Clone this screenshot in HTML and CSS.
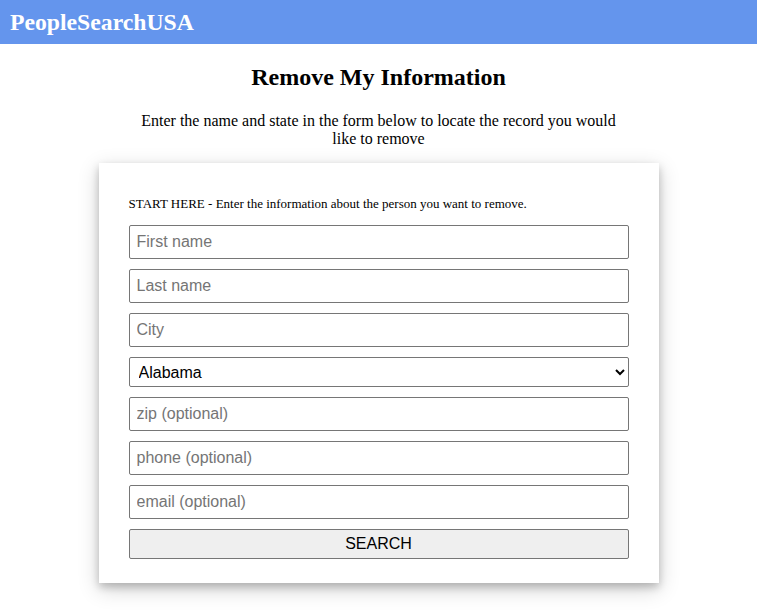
FILE: index.html
```html
<!DOCTYPE html>
<html>
<head>
<meta charset="utf-8">
<link rel="stylesheet" href="styles.css">
</head>
<body>
<header class="topbar"><span class="brand">PeopleSearchUSA</span></header>
<main class="content">
  <h2 class="title">Remove My Information</h2>
  <p class="intro">Enter the name and state in the form below to locate the record you would like to remove</p>
  <form class="card">
    <p class="hint">START HERE - Enter the information about the person you want to remove.</p>
    <input class="field" type="text" placeholder="First name">
    <input class="field" type="text" placeholder="Last name">
    <input class="field" type="text" placeholder="City">
    <select class="field select">
      <option>Alabama</option>
    </select>
    <input class="field" type="text" placeholder="zip (optional)">
    <input class="field" type="text" placeholder="phone (optional)">
    <input class="field" type="text" placeholder="email (optional)">
    <button class="btn" type="button">SEARCH</button>
  </form>
</main>
</body>
</html>
```
FILE: styles.css
```css
html, body {
  margin: 0;
  padding: 0;
  background: #fff;
  font-family: "Liberation Serif", "Times New Roman", serif;
  color: #000;
}
.topbar {
  background: #6495ed;
  height: 44px;
  display: flex;
  align-items: center;
  padding: 0 10px;
}
.brand {
  color: #fff;
  font-weight: bold;
  font-size: 23.7px;
}
.content {
  display: flex;
  flex-direction: column;
  align-items: center;
  padding-bottom: 30px;
}
.title {
  font-size: 24px;
  margin: 19px 0 0;
  line-height: 28px;
}
.intro {
  width: 500px;
  text-align: center;
  font-size: 16px;
  line-height: 18px;
  margin: 21px 0 0;
}
.card {
  width: 500px;
  margin-top: 15px;
  padding: 30px 30px 24px;
  background: #fff;
  box-shadow: 0 4px 8px 0 rgba(0,0,0,0.2), 0 6px 20px 0 rgba(0,0,0,0.19);
  display: flex;
  flex-direction: column;
  gap: 10px;
}
.hint {
  font-size: 13px;
  margin: 3px 0 4px;
  line-height: 15px;
}
.field {
  box-sizing: border-box;
  width: 500px;
  height: 34px;
  margin: 0;
  padding: 0 7px;
  border: 1px solid #767676;
  border-radius: 2px;
  font-family: "Liberation Sans", Arial, sans-serif;
  font-size: 16px;
  color: #000;
  background: #fff;
}
.field::placeholder {
  color: #757575;
}
.select {
  height: 30px;
  padding: 0 5px;
}
.btn {
  box-sizing: border-box;
  width: 500px;
  height: 30px;
  border: 1px solid #767676;
  border-radius: 2px;
  background: #efefef;
  font-family: "Liberation Sans", Arial, sans-serif;
  font-size: 16px;
  color: #000;
}
```
